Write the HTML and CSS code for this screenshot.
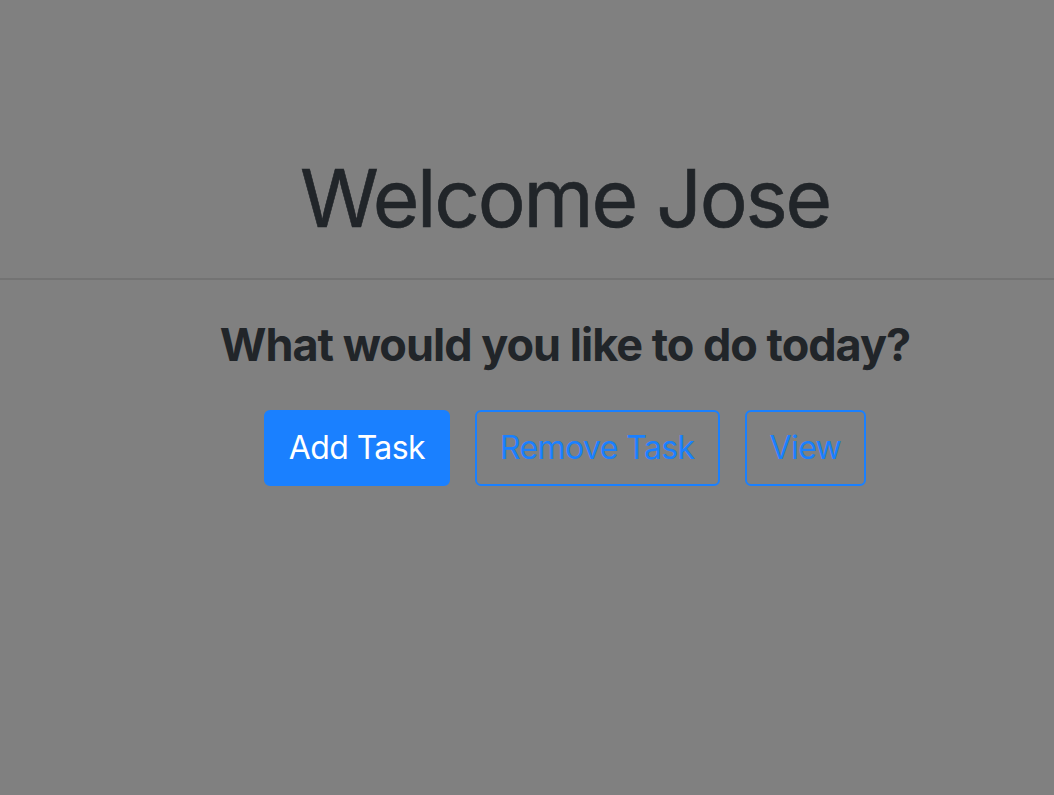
FILE: index.html
```html
<!DOCTYPE html>
<html lang="en">
<head>
<meta charset="utf-8">
<title>Welcome</title>
<link rel="stylesheet" href="styles.css">
</head>
<body>
<main class="page">
  <header class="hero">
    <h1 class="title">Welcome Jose</h1>
  </header>
  <hr class="rule">
  <section class="menu">
    <h3 class="prompt">What would you like to do today?</h3>
    <div class="actions">
      <button class="btn btn-primary" type="button">Add Task</button>
      <button class="btn btn-outline" type="button">Remove Task</button>
      <button class="btn btn-outline" type="button">View</button>
    </div>
  </section>
</main>
</body>
</html>
```
FILE: styles.css
```css
html, body {
  margin: 0;
  padding: 0;
  background: #808080;
  height: 100%;
}
body {
  font-family: Inter, "Noto Sans", "Liberation Sans", sans-serif;
  color: #212529;
}
.page {
  min-height: 100%;
}
.hero {
  padding: 150px 0 0 76px;
  text-align: center;
}
.title {
  margin: 0;
  font-size: 80px;
  font-weight: 400;
  line-height: 96px;
  letter-spacing: -2.2px;
  -webkit-text-stroke: 0.6px #212529;
}
.rule {
  margin: 32px 0 0;
  border: 0;
  border-top: 2px solid #737373;
  height: 0;
}
.menu {
  padding-left: 76px;
  text-align: center;
}
.prompt {
  margin: 38px 0 0;
  font-size: 45px;
  font-weight: 700;
  line-height: 54px;
  letter-spacing: -1px;
}
.actions {
  margin-top: 38px;
  display: flex;
  justify-content: center;
  gap: 25px;
}
.btn {
  font-family: inherit;
  font-size: 32px;
  line-height: 48px;
  letter-spacing: -0.6px;
  padding: 12px 23px;
  border-radius: 6px;
  border: 2px solid #1a80ff;
  cursor: pointer;
}
.btn-primary {
  background: #1a80ff;
  color: #fff;
}
.btn-outline {
  background: transparent;
  color: #1a80ff;
}
```
